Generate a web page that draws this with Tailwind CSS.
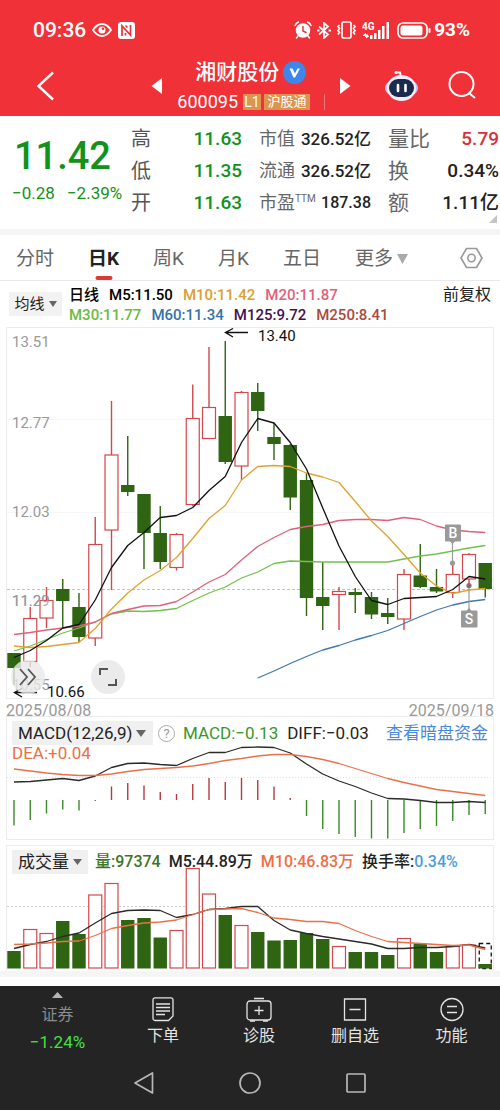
<!DOCTYPE html>
<html lang="zh-CN">
<head>
<meta charset="utf-8">
<meta name="viewport" content="width=device-width, initial-scale=1">
<title>湘财股份 600095</title>
<script src="https://cdn.jsdelivr.net/npm/@tailwindcss/browser@4"></script>
</head>
<body class="bg-white font-[Roboto,'Noto_Sans_CJK_SC',sans-serif] text-[#222]">
<header class="bg-[#f03137] text-white">
  <div class="flex h-[60px] items-center pr-[30px] pl-[33px]">
    <span class="text-[21px] leading-6 font-medium">09:36</span>
    <svg class="ml-[6px] h-[14px] w-[20px]" viewBox="0 0 20 14" fill="none" stroke="#fff" stroke-width="1.8"><path d="M1 7Q5 1 10 1T19 7Q15 13 10 13T1 7Z"/><circle cx="10" cy="7" r="3.6" fill="#fff" stroke="none"/><circle cx="11" cy="5.8" r="1.3" fill="#f03137" stroke="none"/></svg>
    <svg class="ml-[6px] h-[17px] w-[17px]" viewBox="0 0 17 17"><rect width="17" height="17" rx="3" fill="#fff"/><path d="M4 14V4l8.500 9V3M7.500 3.500 9.500 5.500M7.500 11v2.500" fill="none" stroke="#f03137" stroke-width="1.700"/></svg>
    <div class="ml-auto flex items-center">
      <svg class="h-[18px] w-[18px]" viewBox="0 0 18 18" fill="none" stroke="#fff" stroke-width="1.500" stroke-linecap="round"><circle cx="9" cy="9.500" r="6.500" fill="#fff"/><path d="M1 4.500Q2 2 4.500 1M17 4.500Q16 2 13.500 1M4 15l-1.500 2M14 15l1.500 2"/><path d="M9 5.500V10l3 1.500" stroke="#f03137"/></svg>
      <svg class="ml-[5px] h-[17px] w-[14px]" viewBox="0 0 14 17" fill="none" stroke="#fff" stroke-width="1.700"><path d="M2 4.500l9 8L7 16V1l4 3.500-9 8"/><path d="M0 8.500h2.500M11.500 8.500H14" stroke-width="2"/></svg>
      <svg class="ml-[5px] h-[18px] w-[21px]" viewBox="0 0 21 18" fill="none" stroke="#fff" stroke-width="1.700"><rect x="6" y="1" width="9" height="16" rx="1.500"/><path d="M3.500 4 2 5.500l1.500 2L2 9.500l1.500 2L2 13.500M17.500 4 19 5.500l-1.500 2 1.500 2-1.500 2 1.500 2"/></svg>
      <svg class="ml-[5px] h-[18px] w-[28px]" viewBox="0 0 28 18" fill="#fff"><text x="0" y="9" font-size="10" font-weight="700" font-family="Roboto">4G</text><path d="M1 14l3-2v1.500h2V15H1zM7 15.500 4 17.500V16H3v-1.200h4zM8 14h2.500v4H8zM12 12h2.500v6H12zM16 9h2.500v9H16zM20 5h2.500v13H20zM24.500 1H27v17h-2.500z"/></svg>
      <svg class="ml-[7px] h-[17px] w-[34px]" viewBox="0 0 34 17"><rect x="1" y="1" width="29" height="15" rx="5" fill="none" stroke="#fff" stroke-width="1.700"/><rect x="3.500" y="3.500" width="22" height="10" rx="2.500" fill="#fff"/><rect x="31.500" y="6" width="2" height="5" rx="1" fill="#fff"/></svg>
      <span class="ml-[3px] text-[19px] leading-6 font-bold">93%</span>
    </div>
  </div>
  <div class="flex h-14 items-center pr-[23px] pb-1 pl-9">
    <button aria-label="返回" class="shrink-0"><svg class="h-[30px] w-[18px]" viewBox="0 0 18 30" fill="none" stroke="#fff" stroke-width="2.400"><path d="M17 1.500 2.500 15 17 28.500"/></svg></button>
    <div class="mr-[33px] ml-auto flex items-center gap-[14px]">
      <button aria-label="上一只"><svg class="h-4 w-3" viewBox="0 0 12 16" fill="#fff"><path d="M11 0v16L.500 8z"/></svg></button>
      <div class="flex flex-col">
        <h1 class="flex items-center gap-1 pl-[18px] text-[21px] leading-8 font-medium">湘财股份
          <svg class="h-[23px] w-[23px]" viewBox="0 0 23 23"><circle cx="11.500" cy="11.500" r="11.500" fill="#3f86ea"/><path d="M6.500 7.500h3l2.500 5 2.500-5h2.500l-5 9h-1.500z" fill="#fff"/></svg></h1>
        <p class="flex items-center gap-[3px] text-[18px] leading-7">600095
          <span class="ml-[2px] w-[18px] bg-[#dd9450] text-center text-[14px] leading-4">L1</span>
          <span class="w-[46px] bg-[#dd9450] text-center text-[13px] leading-4">沪股通</span></p>
      </div>
      <span class="mb-[6px] h-4 w-px self-end bg-[#e77a7b]"></span>
      <button aria-label="下一只"><svg class="h-4 w-3" viewBox="0 0 12 16" fill="#fff"><path d="M1 0v16L11.500 8z"/></svg></button>
    </div>
    <button aria-label="智能助手" class="mr-7"><svg class="h-[32px] w-[35px]" viewBox="0 0 35 32"><path d="M12 2.500h4l1 4" fill="none" stroke="#f3f0ff" stroke-width="2"/><circle cx="12" cy="2.500" r="1.500" fill="#fff"/><ellipse cx="17.500" cy="18" rx="16.500" ry="10" fill="#c9c2ee"/><ellipse cx="17.500" cy="18" rx="14.500" ry="13" fill="#f1eefc"/><rect x="5" y="9" width="25" height="18" rx="9" fill="#1d2a50"/><path d="M14 15v6M21.500 15v6" stroke="#fff" stroke-width="2.600" stroke-linecap="round"/></svg></button>
    <button aria-label="搜索"><svg class="h-[30px] w-[30px]" viewBox="0 0 30 30" fill="none" stroke="#fff" stroke-width="2"><circle cx="14.500" cy="13" r="12"/><path d="M22 22l6 5"/></svg></button>
  </div>
</header>

<section class="relative flex gap-[17px] border-b-[6px] border-[#f5f5f5] pt-[7px] pb-[10px] pl-3 whitespace-nowrap">
  <div class="min-w-0 flex-1 text-[#12921a]">
    <p class="pt-[10px] pl-[2px] text-[38px] leading-[46px] font-medium">11.42</p>
    <p class="flex gap-3 text-[17px] leading-7"><span>−0.28</span><span>−2.39%</span></p>
  </div>
  <dl class="w-[111px] text-[19px] leading-8">
    <div class="flex justify-between"><dt class="text-[20px] text-[#555]">高</dt><dd class="font-medium text-[#12921a]">11.63</dd></div>
    <div class="flex justify-between"><dt class="text-[20px] text-[#555]">低</dt><dd class="font-medium text-[#12921a]">11.35</dd></div>
    <div class="flex justify-between"><dt class="text-[20px] text-[#555]">开</dt><dd class="font-medium text-[#12921a]">11.63</dd></div>
  </dl>
  <dl class="w-[112px] text-[17px] leading-8">
    <div class="flex justify-between"><dt class="text-[18px] text-[#666]">市值</dt><dd class="font-medium">326.52亿</dd></div>
    <div class="flex justify-between"><dt class="text-[18px] text-[#666]">流通</dt><dd class="font-medium">326.52亿</dd></div>
    <div class="flex justify-between"><dt class="flex text-[18px] text-[#666]">市盈<span class="text-[10px] leading-6">TTM</span></dt><dd class="text-[16px] font-medium">187.38</dd></div>
  </dl>
  <dl class="w-[112px] pr-px text-[19px] leading-8">
    <div class="flex justify-between"><dt class="text-[21px] text-[#666]">量比</dt><dd class="font-medium text-[#d8303a]">5.79</dd></div>
    <div class="flex justify-between"><dt class="text-[21px] text-[#666]">换</dt><dd class="font-medium">0.34%</dd></div>
    <div class="flex justify-between"><dt class="text-[21px] text-[#666]">额</dt><dd class="font-medium">1.11亿</dd></div>
  </dl>
  <svg class="absolute right-[3px] bottom-[6px] h-2 w-2" viewBox="0 0 8 8"><path d="M8 0v8H0z" fill="#c4c4c4"/></svg>
</section>

<nav class="flex h-[46px] items-center gap-[34px] border-b border-[#e9e9e9] pr-[17px] pl-4 text-[19px] text-[#666]">
  <button class="pt-[3px]">分时</button>
  <button class="relative h-full pt-[3px] font-bold text-[#222]">日K<span class="absolute bottom-0 left-1/2 h-1 w-[17px] -translate-x-1/2 rounded-full bg-[#d93a36]"></span></button>
  <button class="pt-[3px]">周K</button>
  <button class="pt-[3px]">月K</button>
  <button class="pt-[3px]">五日</button>
  <button class="flex items-center gap-1 pt-[3px]">更多<svg class="h-[10px] w-[11px]" viewBox="0 0 11 10"><path d="M0 0h11L5.500 10z" fill="#aaa"/></svg></button>
  <button aria-label="设置" class="ml-auto"><svg class="h-[22px] w-[23px]" viewBox="0 0 23 22" fill="none" stroke="#999" stroke-width="1.600" stroke-linejoin="round"><path d="M6.500 1.500h10L22 11l-5.500 9.500h-10L1 11z"/><circle cx="11.500" cy="11" r="3.700"/></svg></button>
</nav>

<div class="flex h-11 items-start pt-1 pr-[9px] pl-[9px]">
  <button class="mt-[7px] mr-[7px] flex h-6 w-[53px] shrink-0 items-center justify-center gap-1 bg-[#f2f2f2] text-[15px]">均线<svg class="h-[6px] w-2" viewBox="0 0 8 6"><path d="M0 0h8L4 6z" fill="#666"/></svg></button>
  <div class="grow text-[15px] leading-5 font-medium whitespace-nowrap">
    <p class="flex gap-[10px] text-black"><span>日线</span><span>M5:11.50</span><span class="text-[#dda02f]">M10:11.42</span><span class="text-[#e3607a]">M20:11.87</span></p>
    <p class="flex gap-[10px]"><span class="text-[#6bbb3f]">M30:11.77</span><span class="text-[#3473a8]">M60:11.34</span><span class="text-[#43124f]">M125:9.72</span><span class="text-[#ab4a3c]">M250:8.41</span></p>
  </div>
  <span class="text-[16px] leading-5">前复权</span>
</div>

<main>
  <section class="relative">
    <svg id="kline" class="block w-full" viewBox="0 325 500 376" fill="none" font-family="Roboto" font-size="15" role="img" aria-label="日K线图">
      <path d="M6.500 327.500H493.500V698.500H6.500z" stroke="#ececec"/>
      <path d="M7 419.500H493M7 512.500H493" stroke="#f6f6f6"/>
      <g fill="#999"><text x="12" y="347">13.51</text><text x="12" y="428">12.77</text><text x="12" y="517">12.03</text><text x="12" y="606">11.29</text><text x="12" y="690">10.55</text></g>
      <path d="M7 589.500H493" stroke="#d5bf9c" stroke-dasharray="3 2"/>
    </svg>
    <div class="absolute bottom-[7px] left-[11px] flex gap-[46px]">
      <button aria-label="展开" class="flex size-[34px] items-center justify-center rounded-full bg-[#e9e9e9]/80"><svg class="h-[18px] w-[18px]" viewBox="0 0 18 18" fill="none" stroke="#555" stroke-width="1.800"><path d="M1 1l7 8-7 8M9 1l7 8-7 8"/></svg></button>
      <button aria-label="全屏" class="flex size-[34px] items-center justify-center rounded-full bg-[#e9e9e9]/90"><svg class="h-[18px] w-[18px]" viewBox="0 0 18 18" fill="none" stroke="#555" stroke-width="2"><path d="M1 7V1h8M17 11v6H9"/></svg></button>
    </div>
  </section>
  <div class="flex h-[15px] items-center justify-between px-[6px] pt-1 text-[16px] leading-4 text-[#999]"><time>2025/08/08</time><time>2025/09/18</time></div>

  <section class="relative">
    <svg id="macd" class="block w-full" viewBox="0 716 500 126" fill="none" role="img" aria-label="MACD指标">
      <path d="M6.500 716.500H493.500V839.500H6.500z" stroke="#ececec"/>
      <path d="M7 777.500H493" stroke="#e2e2e2" stroke-dasharray="1 2"/>
    </svg>
    <div class="absolute inset-x-3 top-[5px] text-[17px] leading-6 whitespace-nowrap">
      <div class="flex items-center">
        <button class="flex h-6 w-[141px] items-center gap-1 bg-[#f0f0f0] pl-[6px]">MACD(12,26,9)<svg class="h-[7px] w-[10px]" viewBox="0 0 10 7"><path d="M0 0h10L5 7z" fill="#666"/></svg></button>
        <button aria-label="帮助" class="mx-[5px] size-[17px] rounded-full border border-[#aaa] text-[13px] leading-[15px] text-[#999]">?</button>
        <span class="ml-[3px] text-[#3a962c]">MACD:−0.13</span>
        <span class="ml-[9px]">DIFF:−0.03</span>
        <a href="#" class="ml-auto text-[#4889dd]">查看暗盘资金</a>
      </div>
      <p class="leading-4 text-[#ee6e43]">DEA:+0.04</p>
    </div>
  </section>

  <section class="relative border-b-[6px] border-[#f5f5f5]">
    <svg id="volume" class="block w-full" viewBox="0 842 500 129" fill="none" role="img" aria-label="成交量">
      <path d="M6.500 971V845.500H493.500V971" stroke="#ececec"/>
      <path d="M7 906.500H493" stroke="#ccc" stroke-dasharray="2 2"/>
    </svg>
    <div class="absolute inset-x-3 top-2 flex items-center gap-[8px] text-[16px] leading-6 font-medium whitespace-nowrap">
      <button class="-mr-px flex h-6 w-[76px] items-center gap-1 bg-[#f0f0f0] pl-[6px] text-[17px] font-normal">成交量<svg class="h-[6px] w-[9px]" viewBox="0 0 9 6"><path d="M0 0h9L4.500 6z" fill="#666"/></svg></button>
      <span class="text-[#3d7426]">量:97374</span><span>M5:44.89万</span><span class="text-[#ee6e43]">M10:46.83万</span>
      <span>换手率:<span class="text-[#4a9edb]">0.34%</span></span>
    </div>
  </section>
</main>

<footer class="mt-[9px] bg-[#242424] text-[#e4e4e4]">
  <nav class="grid h-[70px] grid-cols-[115fr_96fr_96fr_96fr_97fr] text-[16px] leading-6">
    <button class="flex flex-col items-center pt-[6px] text-[#8c8c8c]"><svg class="h-[6px] w-[11px]" viewBox="0 0 11 6"><path d="M5.500 0 11 6H0z" fill="#b5b5b5"/></svg><span class="pt-[5px]">证券</span><span class="pt-px text-[17px] leading-7 text-[#43e043]">−1.24%</span></button>
    <button class="flex flex-col items-center gap-[2px] pt-[11px]"><svg class="h-[25px] w-6" viewBox="0 0 24 25" fill="none" stroke="currentColor" stroke-width="1.300"><path d="M4 .8h16a2 2 0 0 1 2 2V19l-4.500 4.500H4a2 2 0 0 1-2-2V2.800a2 2 0 0 1 2-2zM5 7h14M5 10.500h14M5 14h14M5 17.500h9"/></svg><span>下单</span></button>
    <button class="flex flex-col items-center gap-[2px] pt-[11px]"><svg class="h-[25px] w-[26px]" viewBox="0 0 26 25" fill="none" stroke="currentColor" stroke-width="1.300"><rect x="1" y="4" width="24" height="19" rx="3"/><path d="M8 1.500h10M13 9v9M8.500 13.500h9M4 24h5M17 24h5"/></svg><span>诊股</span></button>
    <button class="flex flex-col items-center gap-[2px] pt-[11px]"><svg class="h-[25px] w-6" viewBox="0 0 24 25" fill="none" stroke="currentColor" stroke-width="1.300"><path d="M1.500 2h21v21h-21zM6.500 12.500h11"/></svg><span>删自选</span></button>
    <button class="flex flex-col items-center gap-[2px] pt-[11px]"><svg class="h-[25px] w-6" viewBox="0 0 24 25" fill="none" stroke="currentColor" stroke-width="1.300"><circle cx="12" cy="12.500" r="11"/><path d="M7 9.500h10M7 15.500h10"/></svg><span>功能</span></button>
  </nav>
  <div class="flex h-[54px] items-center justify-center gap-[84px]">
    <button aria-label="返回"><svg class="size-[22px]" viewBox="0 0 22 22" fill="none" stroke="#b8b8b8" stroke-width="1.700" stroke-linejoin="round"><path d="M19.500 1v20L2 11z"/></svg></button>
    <button aria-label="主页"><svg class="size-[22px]" viewBox="0 0 22 22" fill="none" stroke="#b8b8b8" stroke-width="1.700"><circle cx="11" cy="11" r="10"/></svg></button>
    <button aria-label="最近任务"><svg class="size-[22px]" viewBox="0 0 22 22" fill="none" stroke="#b8b8b8" stroke-width="1.700"><rect x="2" y="2" width="18" height="18" rx="1"/></svg></button>
  </div>
</footer>

<script>
const NS = 'http://www.w3.org/2000/svg';
const X = i => 14 + i * 16.25;
const RED = '#d2484c', GREEN = '#2e6412';
function add(svg, tag, attrs, text) {
  const e = document.createElementNS(NS, tag);
  for (const k in attrs) e.setAttribute(k, attrs[k]);
  if (text) e.textContent = text;
  svg.appendChild(e);
}
function line(svg, ys, color, start = 0) {
  add(svg, 'polyline', { points: ys.map((y, i) => X(i + start) + ',' + y).join(' '), stroke: color, 'stroke-width': 1.3, 'stroke-linejoin': 'round' });
}
function bar(svg, i, up, top, bottom) {
  if (up) add(svg, 'rect', { x: X(i) - 6.5, y: top + .5, width: 13, height: Math.max(bottom - top - 1, 1), stroke: RED, 'stroke-width': 1.2, fill: '#fff' });
  else add(svg, 'rect', { x: X(i) - 6.7, y: top, width: 13.4, height: bottom - top, fill: GREEN });
}

// Candles: [rising, high, body top, body bottom, low]
const candles = [
[0,653,653,668,685],[1,607,618,662,667],[1,587,600,618.5,628],[0,579,589,601,628],[0,593,607,637,642],
[1,517,544,638.5,646],[1,401,454.5,530.5,590],[0,436,485,492,496],[0,494,494,533,569],[0,506,533,562,569],
[1,533,534,568,570.5],[1,384.5,418,505,506],[1,347,407,439,439],[0,341,416,462,464],[1,391,392,466.5,480],
[0,383,392,411,431],[0,423,437,444,460],[0,444,445,497.5,510],[0,473,480,598,616],[0,562,597,606,630],
[1,587,591,595,630],[0,588,592,595,613],[0,592,597,614.5,619],[0,598,613,617,624],[1,569,574,619.5,630],
[0,544,575.5,587,588],[0,569,587,591.5,593],[1,563,574,593,598],[1,553,554,579.5,585],[0,563,563,589,597.5]];
const k = document.getElementById('kline');
candles.forEach(([up, h, t, b, l], i) => {
  add(k, 'path', { d: `M${X(i)} ${h}V${l}`, stroke: up ? RED : GREEN, 'stroke-width': 1.4 });
  bar(k, i, up, t, b);
});
// Keep the price label readable over the first rising candles
add(k, 'text', { x: 12, y: 606, fill: '#999', 'fill-opacity': .8 }, '11.29');
line(k, [651,646,639.5,633,628,622,614,611,611.5,610.5,608.5,600.5,593,587,578,572,563.5,561,561.5,562,562,562,562,562,559,556,554,551,548,545.5], '#72c14b');
line(k, [634.5,632.5,630,628,626,622,613.5,609.5,606,605.5,601.5,592,582,574.5,560,546.5,537.5,529.5,526.5,524.5,520.5,519.5,519.5,520.5,517.5,519.5,526,530,531.5,532.5], '#df6079');
line(k, [646,647.5,646.5,644.5,642.5,628.5,609,593,580,570.5,557.5,538.5,518.5,505.5,480,466.5,465.5,466.5,473,477,482.5,501.5,521,536.5,554.5,573,586,593.5,590,588.5], '#e0a231');
line(k, [678,671,663.5,656.5,650,645.5,640,635.5,630.5,623.5,616.5,610,605,601.5,599.5], '#4079ae', 15);
line(k, [657.5,650.5,640.5,628,624.5,600,567.5,545.5,532.5,517.5,515.5,507.5,490.5,476.5,442.5,418.5,423,442.5,469,508,546,576.5,600.5,604.5,598.5,597.5,596.5,589.5,576.5,579], '#111');
add(k, 'path', { d: 'M248 332.500H226M233 328.500L225.500 332.500L233 337M37 692.500H15M22 688.500L14.500 692.500L22 697', stroke: '#111', 'stroke-width': 1.4 });
add(k, 'text', { x: 258, y: 341, fill: '#111' }, '13.40');
add(k, 'text', { x: 47, y: 696.5, fill: '#111' }, '10.66');
add(k, 'path', { d: 'M452.500 541V563M469 585V610', stroke: '#999', 'stroke-width': 1.2 });
add(k, 'path', { d: 'M446 524.500h14q1 0 1 1v15q0 1-1 1h-5l-2.500 2.500-2.500-2.500h-4q-1 0-1-1v-15q0-1 1-1zM462 610.500h4.500l2.500-2.500 2.500 2.500h5q1 0 1 1v15q0 1-1 1H462q-1 0-1-1v-15q0-1 1-1z', fill: '#999' });
add(k, 'circle', { cx: 452.5, cy: 563, r: 2.6, fill: '#999' });
add(k, 'circle', { cx: 469, cy: 585.5, r: 2.6, fill: '#8a6a6a' });
const mark = { 'text-anchor': 'middle', fill: '#fff', 'font-size': 14, 'font-weight': 500 };
add(k, 'text', { ...mark, x: 453, y: 538 }, 'B');
add(k, 'text', { ...mark, x: 469, y: 624 }, 'S');

// MACD histogram, measured from the zero line at 800
const m = document.getElementById('macd');
[825.5,820,813.5,809.5,810.5,801,786.5,783,785.5,792,794,784,778,782,778,780,786.5,798,816,829,834,837,838.5,838.5,833,829,826,821,815,814]
  .forEach((y, i) => add(m, 'path', { d: `M${X(i)} 800V${y}`, stroke: y < 800 ? '#b8393c' : '#3a8a2a', 'stroke-width': 1.4 }));
line(m, [782,781.5,780,778.5,780.5,776,767.5,763.5,763,764.5,765.5,758.5,752.5,752.5,747.5,747,747.5,753,764,774,781,786.5,793,798.5,799,800.5,802.5,802.5,801.5,802.5], '#2b2b2b');
line(m, [769,771,773,774.5,775.5,775.5,774,771.5,769.5,768.5,767.5,766,763.5,760.5,758.5,756,754.5,754.5,756.5,759.5,763.5,768.5,773.5,778.5,782.5,786,789.5,791.5,793.5,795.5], '#ea7048');

// Volume bars
const v = document.getElementById('volume');
[951,929,933,921,934,894.5,883,920,918,937.5,930,868,893.5,915,925,932,940.5,940,933,939,946,952,952,955,938,943.5,952,946,944.5]
  .forEach((y, i) => bar(v, i, candles[i][0], y, 968.5));
add(v, 'rect', { x: X(29) - 6, y: 943.5, width: 12, height: 25, stroke: '#111', 'stroke-width': 1.3, 'stroke-dasharray': '4 3', fill: '#fff' });
bar(v, 29, 0, 964, 968.5);
line(v, [948.5,944.5,941.5,936.5,933,923,913.5,910.5,910,910.5,917.5,914.5,909.5,908.5,906.5,906.5,920.5,930,933.5,936.5,939,941.5,944,948.5,948.5,947.5,947.5,946.5,944.5,948], '#2b2b2b');
line(v, [944.5,944,943,941.5,941,935.5,928.5,925.5,923,922,920,914.5,909.5,909,908.5,912.5,918,919.5,921.5,921.5,923.5,930.5,936.5,941.5,942.5,943.5,944.5,945.5,945,949.5], '#ea7048');
</script>
</body>
</html>
